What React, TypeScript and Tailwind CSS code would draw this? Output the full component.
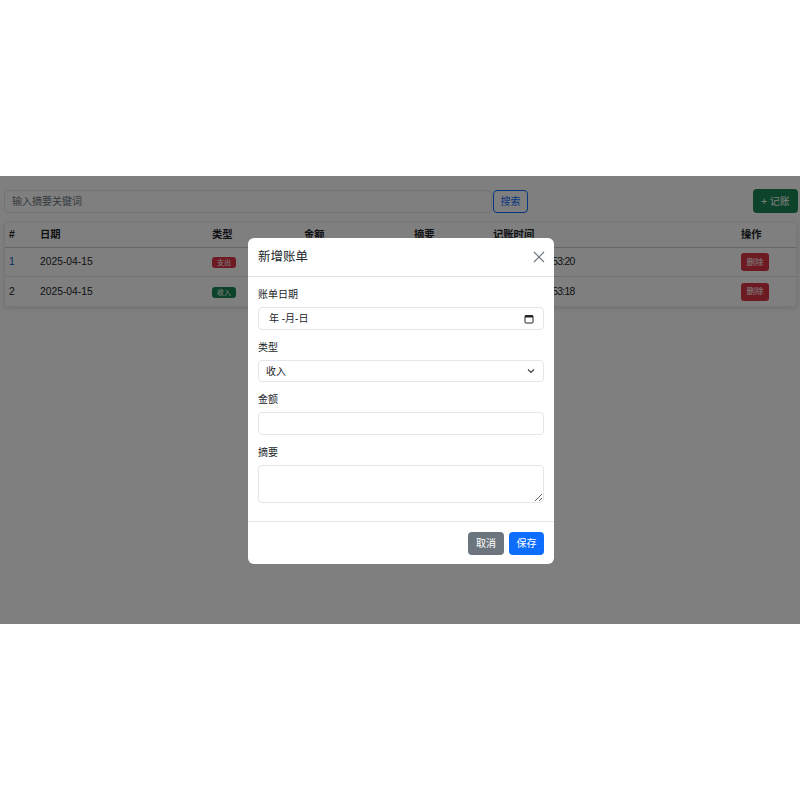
import React from "react";

interface Bill {
  id: number;
  date: string;
  type: "income" | "expense";
  amount: string;
  note: string;
  time: string;
}

const bills: Bill[] = [
  { id: 1, date: "2025-04-15", type: "expense", amount: "35.00", note: "午餐", time: "2025-04-15 13:53:20" },
  { id: 2, date: "2025-04-15", type: "income", amount: "5000.00", note: "工资", time: "2025-04-15 13:53:18" },
];

const cols = "grid grid-cols-[31px_172px_92px_110px_79px_248px_1fr]";

function Field({ label, children }: { label: string; children: React.ReactNode }) {
  return (
    <div className="mb-[10px]">
      <div className="text-[10px] leading-[15px] text-[#212529] mb-[5px]">{label}</div>
      {children}
    </div>
  );
}

export default function App() {
  return (
    <div className="w-[800px] h-[800px] bg-white flex flex-col font-['Liberation_Sans','Noto_Sans_CJK_SC',sans-serif] text-[#212529]">
      <div className="h-[176px] shrink-0" />
      <div className="relative h-[448px] shrink-0 overflow-hidden bg-white">
        {/* page */}
        <div className="pt-[13px] pl-[4px] pr-[2px]">
          <div className="flex items-center justify-between">
            <div className="flex items-center gap-[1px]">
              <div className="w-[488px] h-[23px] border border-[#e3e6ea] rounded-[4px] flex items-center px-[7px] text-[10px] text-[#6c757d]">
                输入摘要关键词
              </div>
              <button className="w-[35px] h-[23px] border border-[#0d6efd] rounded-[4px] text-[10px] text-[#0d6efd]">
                搜索
              </button>
            </div>
            <button className="w-[45px] h-[24px] bg-[#198754] rounded-[4px] text-[10px] text-white">
              + 记账
            </button>
          </div>

          <div className="mt-[9px] mr-[1px] bg-white rounded-[3px] shadow-[0_1px_4px_rgba(0,0,0,0.15)] border border-[#eef0f2] text-[10.3px]">
            <div className={`${cols} h-[25px] items-center font-bold border-b border-[#c9ced3]`}>
              <div className="pl-[4px]">#</div>
              <div className="pl-[4px]">日期</div>
              <div className="pl-[4px]">类型</div>
              <div className="pl-[4px]">金额</div>
              <div className="pl-[4px]">摘要</div>
              <div className="pl-[4px]">记账时间</div>
              <div className="pl-[4px]">操作</div>
            </div>
            {bills.map((b, i) => (
              <div
                key={b.id}
                className={`${cols} h-[29px] items-center ${i === 0 ? "border-b border-[#dee2e6]" : ""}`}
              >
                <div className={`pl-[4px] ${i === 0 ? "text-[#0a58ca]" : ""}`}>{b.id}</div>
                <div className="pl-[4px]">{b.date}</div>
                <div className="pl-[4px]">
                  <span
                    className={`inline-flex items-center justify-center w-[24px] h-[11px] rounded-[3px] text-[7px] leading-none text-white ${
                      b.type === "expense" ? "bg-[#dc3545]" : "bg-[#198754]"
                    }`}
                  >
                    {b.type === "expense" ? "支出" : "收入"}
                  </span>
                </div>
                <div className="pl-[4px]">{b.amount}</div>
                <div className="pl-[4px]">{b.note}</div>
                <div className="pl-[4px] tracking-[-0.75px]">{b.time}</div>
                <div className="pl-[4px]">
                  <button className="w-[28px] h-[18px] bg-[#dc3545] rounded-[3px] text-[8.5px] text-white">
                    删除
                  </button>
                </div>
              </div>
            ))}
          </div>
        </div>

        {/* backdrop + modal */}
        <div className="absolute inset-0 bg-black/50 flex justify-center pt-[62px] pl-[2px]">
          <div className="w-[306px] h-[326px] bg-white rounded-[6px] flex flex-col">
            <div className="h-[39px] flex items-center justify-between px-[10px] border-b border-[#dee2e6]">
              <div className="text-[12.5px] leading-[18px] text-[#212529]">新增账单</div>
              <svg width="12" height="12" viewBox="0 0 12 12" className="mr-[-1px]">
                <path d="M1 1L11 11M11 1L1 11" stroke="#6c757d" strokeWidth="1.1" />
              </svg>
            </div>
            <div className="px-[10px] pt-[10px] pb-[0px]">
              <Field label="账单日期">
                <div className="h-[23px] border border-[#e3e6ea] rounded-[4px] flex items-center justify-between pl-[10px] pr-[9px]">
                  <span className="text-[10px] text-[#212529]">年 -月-日</span>
                  <svg width="10" height="10" viewBox="0 0 10 10">
                    <rect x="1" y="1.5" width="8" height="7.5" rx="0.8" fill="none" stroke="#212529" strokeWidth="1" />
                    <rect x="1" y="1.5" width="8" height="2" fill="#212529" />
                  </svg>
                </div>
              </Field>
              <Field label="类型">
                <div className="h-[22px] border border-[#e3e6ea] rounded-[4px] flex items-center justify-between pl-[7px] pr-[8px]">
                  <span className="text-[10px] text-[#212529]">收入</span>
                  <svg width="8" height="8" viewBox="0 0 8 8">
                    <path d="M1 2.5L4 5.5L7 2.5" fill="none" stroke="#343a40" strokeWidth="1.1" />
                  </svg>
                </div>
              </Field>
              <Field label="金额">
                <div className="h-[23px] border border-[#e3e6ea] rounded-[4px]" />
              </Field>
              <Field label="摘要">
                <textarea
                  readOnly
                  className="block w-full h-[38px] border border-[#e3e6ea] rounded-[4px] outline-none resize-y"
                />
              </Field>
            </div>
            <div className="mt-auto h-[43px] border-t border-[#e3e6ea] flex items-center justify-end gap-[5px] px-[10px] pt-[1px]">
              <button className="w-[36px] h-[23px] bg-[#6c757d] rounded-[4px] text-[10px] text-white">取消</button>
              <button className="w-[35px] h-[23px] bg-[#0d6efd] rounded-[4px] text-[10px] text-white">保存</button>
            </div>
          </div>
        </div>
      </div>
      <div className="flex-1" />
    </div>
  );
}
